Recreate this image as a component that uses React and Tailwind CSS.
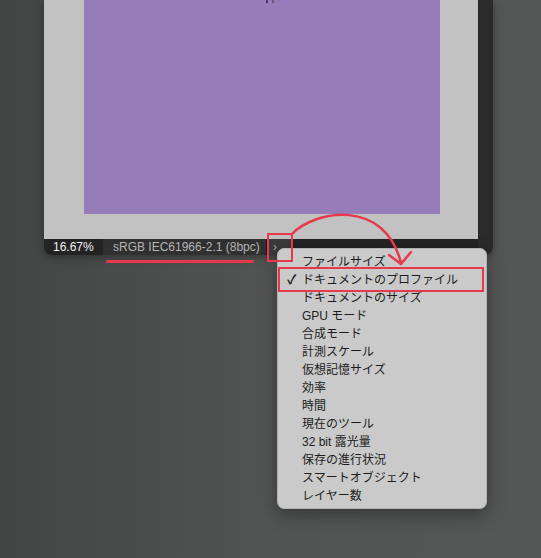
import React from "react";

const items = [
  "ファイルサイズ",
  "ドキュメントのプロファイル",
  "ドキュメントのサイズ",
  "GPU モード",
  "合成モード",
  "計測スケール",
  "仮想記憶サイズ",
  "効率",
  "時間",
  "現在のツール",
  "32 bit 露光量",
  "保存の進行状況",
  "スマートオブジェクト",
  "レイヤー数",
];

const font = { fontFamily: '"Liberation Sans", "Noto Sans CJK JP", sans-serif' };

export default function App() {
  return (
    <div
      className="relative w-[541px] h-[558px] overflow-hidden bg-gradient-to-r from-[#434544] via-[#525453] to-[#555756]"
      style={font}
    >
      {/* window */}
      <div className="ml-[44px] w-[449px] h-[255px] flex rounded-b-[8px] overflow-hidden shadow-[0_2px_8px_rgba(0,0,0,0.35)]">
        <div className="w-[434px] flex flex-col">
          <div className="h-[239px] bg-[#c2c2c2] pl-[40px]">
            <div className="relative w-[356px] h-[214px] bg-[#967cb8]">
              <div className="absolute left-[182px] top-0 w-[2px] h-[3px] bg-[#4a3a5e]" />
              <div className="absolute left-[188px] top-0 w-[2px] h-[3px] bg-[#6a5a7e]" />
            </div>
          </div>
          <div className="h-[16px] bg-[#232323] flex items-center text-[12px] leading-none">
            <div className="w-[59px] pl-[9px] text-[#f2f2f2]">16.67%</div>
            <div className="w-[163px] h-full bg-[#303030] pl-[10px] flex items-center text-[#b4b4b4]">
              sRGB IEC61966-2.1 (8bpc)
            </div>
            <div className="w-[1px] h-full bg-[#1c1c1c]" />
            <div className="w-[26px] h-full bg-[#3a3a3a] pl-[6px] flex items-center text-[#a8a8a8]">›</div>
          </div>
        </div>
        <div className="w-[15px] bg-[#2a2a2a]" />
      </div>

      {/* menu */}
      <div className="absolute left-[277px] top-[248px] w-[210px] h-[261px] rounded-[7px] bg-[#c9cac9] pt-[4px] shadow-[0_6px_18px_rgba(0,0,0,0.35)] border border-[#b0b1b0]">
        {items.map((t, i) => (
          <div key={t} className="relative h-[18px] flex items-center pl-[24px] text-[12px] text-[#1c1c1c]">
            {i === 1 && (
              <span className="absolute left-[9px] text-[13px] font-bold text-[#1c1c1c]">✓</span>
            )}
            {t}
          </div>
        ))}
      </div>

      {/* annotations */}
      <div className="absolute left-[278px] top-[267px] w-[206px] h-[25px] border-2 border-[#e63a4c]" />
      <div className="absolute left-[267px] top-[233px] w-[26px] h-[29px] border-2 border-[#e63a4c]" />
      <div className="absolute left-[106px] top-[260px] w-[148px] h-[3px] rounded-full bg-[#e63a4c]" />
      <svg className="absolute left-0 top-0" width="541" height="558" viewBox="0 0 541 558" fill="none">
        <path d="M292 234 C 315 210, 385 198, 401 263" stroke="#e63a4c" strokeWidth="2.5" strokeLinecap="round" />
        <path d="M389 255 L401 264 L411 252" stroke="#e63a4c" strokeWidth="2.5" strokeLinecap="round" strokeLinejoin="round" />
      </svg>
    </div>
  );
}
